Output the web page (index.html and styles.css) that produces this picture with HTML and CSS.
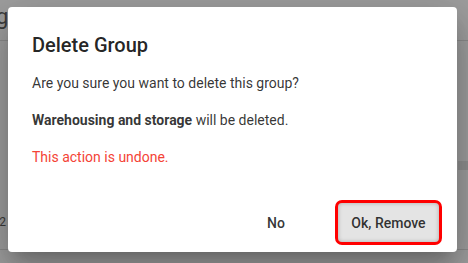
FILE: index.html
```html
<!DOCTYPE html>
<html lang="en">
  <head>
    <meta charset="UTF-8" />
    <meta name="viewport" content="width=device-width, initial-scale=1.0" />
    <title>Delete Group</title>
    <link rel="stylesheet" href="styles.css">
  </head>

  <body>
    <!-- halaman di belakang dialog -->
    <div class="page">
      <div class="page-header">g</div>
      <div class="page-side"></div>
      <div class="page-row">-2</div>
    </div>

    <div class="dialog">
      <h2 class="dialog-title">Delete Group</h2>
      <div class="dialog-content">
        <p>Are you sure you want to delete this group?</p>
        <p><b>Warehousing and storage</b> will be deleted.</p>
        <p class="warning">This action is undone.</p>
      </div>
      <div class="dialog-actions">
        <button class="btn">No</button>
        <button class="btn btn-confirm">Ok, Remove</button>
      </div>
    </div>
  </body>
</html>
```

FILE: styles.css
```css
body {
  font-family: Roboto, "Liberation Sans", sans-serif;
  margin: 0;
  background-color: #9e9e9e;
  width: 468px;
  height: 263px;
  overflow: hidden;
  position: relative;
}

.page {
  height: 263px;
  color: #3a3a3a;
}

.page-header {
  height: 40px;
  border-bottom: 1px solid #8a8a8a;
  font-size: 22px;
  line-height: 34px;
  margin-left: -4px;
}

.page-side {
  position: absolute;
  right: 0;
  top: 161px;
  width: 10px;
  height: 9px;
  background-color: #8f8f8f;
}

.page-row {
  margin-top: 174px;
  font-size: 12px;
  margin-left: -4px;
  height: 34px;
  border-bottom: 1px solid #8a8a8a;
}

.dialog {
  position: absolute;
  left: 8px;
  top: 7px;
  width: 449px;
  height: 245px;
  background-color: white;
  border-radius: 4px;
  box-shadow: 0 11px 15px -7px rgba(0, 0, 0, 0.2),
    0 24px 38px 3px rgba(0, 0, 0, 0.14), 0 9px 46px 8px rgba(0, 0, 0, 0.12);
  display: flex;
  flex-direction: column;
}

.dialog-title {
  margin: 0;
  padding: 26px 24px 10px;
  font-size: 20px;
  font-weight: 500;
  line-height: 24px;
  color: rgba(0, 0, 0, 0.87);
}

.dialog-content {
  padding: 0 24px;
  font-size: 14px;
  color: rgba(0, 0, 0, 0.8);
  flex: 1;
}

.dialog-content p {
  margin: 8px 0 21px;
  line-height: 16px;
}

.dialog-content b {
  font-weight: 700;
}

.warning {
  color: #f44336;
}

.dialog-actions {
  display: flex;
  justify-content: flex-end;
  align-items: center;
  gap: 42px;
  padding: 0 15px 7px;
}

.btn {
  font-family: inherit;
  font-size: 14px;
  font-weight: 500;
  color: rgba(0, 0, 0, 0.8);
  background: none;
  border: none;
  padding: 10px 8px;
  cursor: pointer;
}

.btn-confirm {
  background-color: #e4e4e4;
  padding: 9px 10px;
  width: 107px;
  height: 45px;
  border: 3px solid #ff0000;
  border-radius: 7px;
  box-shadow: inset 0 0 4px rgba(0, 0, 0, 0.25);
}
```
